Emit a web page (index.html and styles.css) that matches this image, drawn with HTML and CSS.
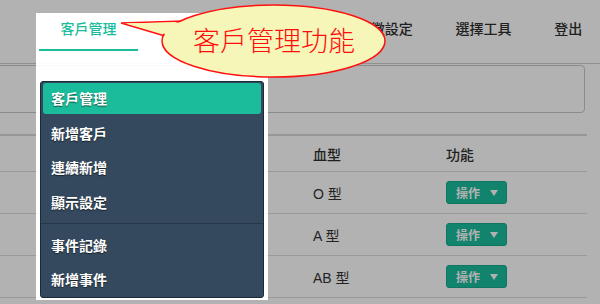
FILE: index.html
```html
<!DOCTYPE html>
<html lang="zh-Hant">
<head>
<meta charset="utf-8">
<link rel="stylesheet" href="styles.css">
</head>
<body>
<div class="page">
  <nav class="topnav">
    <ul class="nav-list">
      <li class="nav-item is-focus">
        <a class="nav-link active">客戶管理</a>
        <div class="dropdown">
          <a class="dd-item active">客戶管理</a>
          <a class="dd-item">新增客戶</a>
          <a class="dd-item">連續新增</a>
          <a class="dd-item">顯示設定</a>
          <div class="dd-divider"></div>
          <a class="dd-item">事件記錄</a>
          <a class="dd-item">新增事件</a>
        </div>
      </li>
      <li class="nav-item"><a class="nav-link">統計報表</a></li>
      <li class="nav-item"><a class="nav-link">系統管理</a></li>
      <li class="nav-item"><a class="nav-link">特徵設定</a></li>
      <li class="nav-item"><a class="nav-link">選擇工具</a></li>
      <li class="nav-item"><a class="nav-link">登出</a></li>
    </ul>
  </nav>
  <main class="content">
    <div class="search-box"></div>
    <table class="data-table">
      <colgroup>
        <col class="c-sel"><col class="c-name"><col class="c-sex"><col class="c-blood"><col class="c-act">
      </colgroup>
      <thead>
        <tr><th></th><th></th><th></th><th>血型</th><th>功能</th></tr>
      </thead>
      <tbody>
        <tr><td></td><td></td><td></td><td>O 型</td><td><span class="btn-op">操作<i class="caret"></i></span></td></tr>
        <tr><td></td><td></td><td></td><td>A 型</td><td><span class="btn-op">操作<i class="caret"></i></span></td></tr>
        <tr><td></td><td></td><td></td><td>AB 型</td><td><span class="btn-op">操作<i class="caret"></i></span></td></tr>
      </tbody>
    </table>
  </main>
</div>
<div class="intro-helper"></div>
<svg class="balloon" width="600" height="304" viewBox="0 0 600 304">
  <polygon class="tail-stroke" points="165,36 121,23 182,21"/>
  <ellipse class="bubble" cx="273.5" cy="41" rx="111.5" ry="36"/>
  <polygon class="tail-fill" points="167,34.5 125,23.2 184,22.5 186,28 170,33"/>
  <text class="balloon-text" x="274" y="51">客戶管理功能</text>
</svg>
</body>
</html>
```

FILE: styles.css
```css
html, body {
  margin: 0;
  padding: 0;
  background: #ffffff;
  overflow: hidden;
}

body {
  width: 600px;
  height: 304px;
  position: relative;
  font-family: "Liberation Sans", "Noto Sans CJK TC", sans-serif;
  color: #333333;
}

.page {
  width: 600px;
  height: 304px;
}

/* ---------- top navigation ---------- */
.topnav {
  height: 63px;
  border-bottom: 1px solid #cfcfcf;
}

.nav-list {
  display: flex;
  margin: 0;
  padding: 0 0 0 39px;
  list-style: none;
}

.nav-item {
  position: relative;
}

.nav-item.is-focus {
  z-index: 10;
}

.nav-link {
  display: block;
  padding: 18px 21.4px 11px;
  line-height: 20px;
  font-size: 14px;
  font-family: "Noto Sans CJK TC", sans-serif;
  font-weight: 500;
  color: #2f2f2f;
  border-bottom: 2px solid transparent;
  white-space: nowrap;
}

.nav-link.active {
  color: #1abc9c;
  border-bottom-color: #1abc9c;
}

/* ---------- dropdown ---------- */
.dropdown {
  position: absolute;
  top: 81px;
  left: 1px;
  width: 224px;
  box-sizing: border-box;
  display: flex;
  flex-direction: column;
  gap: 3.5px;
  padding: 1px 2px 2px;
  background: #34495e;
  border: 1px solid #1c2a38;
  border-radius: 3px;
}

.dd-item {
  display: block;
  line-height: 31px;
  height: 31px;
  padding-left: 8px;
  border-radius: 3px;
  font-family: "Noto Sans CJK TC", sans-serif;
  font-size: 14px;
  font-weight: 700;
  color: #ffffff;
  text-shadow: 0 1px 1px rgba(0, 0, 0, 0.55);
}

.dd-item.active {
  background: #1abc9c;
}

.dd-divider {
  height: 1px;
  margin: 2px -2px;
  background: #26384a;
}

/* ---------- content ---------- */
.content {
  margin-left: -15px;
  width: 602px;
}

.search-box {
  margin-top: 1px;
  width: 600px;
  height: 48px;
  box-sizing: border-box;
  border: 1px solid #c6c6c6;
  border-radius: 4px;
}

.data-table {
  margin-top: 21px;
  width: 602px;
  table-layout: fixed;
  border-collapse: separate;
  border-spacing: 0;
  border-top: 2px solid #d9d9d9;
  font-size: 14px;
}

.c-sel { width: 60px; }
.c-name { width: 140px; }
.c-sex { width: 120px; }
.c-blood { width: 133px; }
.c-act { width: 149px; }

.data-table th {
  height: 35px;
  padding: 0 8px;
  text-align: left;
  font-family: "Noto Sans CJK TC", sans-serif;
  font-weight: 500;
  font-size: 14px;
  color: #2f2f2f;
  border-bottom: 1px solid #dddddd;
  vertical-align: middle;
}

.data-table td {
  height: 41px;
  padding: 0 8px;
  border-bottom: 1px solid #dddddd;
  vertical-align: middle;
  color: #333333;
}

.btn-op {
  display: inline-flex;
  align-items: center;
  gap: 10px;
  box-sizing: border-box;
  width: 61px;
  height: 23px;
  padding: 0 0 0 9px;
  background: #1abc9c;
  border: 1px solid #18a98c;
  border-radius: 3px;
  color: #ffffff;
  font-family: "Noto Sans CJK TC", sans-serif;
  font-size: 12px;
  font-weight: 700;
  vertical-align: middle;
}

.caret {
  display: block;
  width: 0;
  height: 0;
  border-left: 4.5px solid transparent;
  border-right: 4.5px solid transparent;
  border-top: 6px solid #ffffff;
}

/* ---------- intro overlay ---------- */
.intro-helper {
  position: absolute;
  left: 36px;
  top: 13px;
  width: 232px;
  height: 287px;
  z-index: 5;
  background: rgba(255, 255, 255, 0.9);
  box-shadow: 0 0 0 1200px rgba(0, 0, 0, 0.3);
}

.balloon {
  position: absolute;
  left: 0;
  top: 0;
  z-index: 20;
  pointer-events: none;
}

.tail-stroke,
.bubble {
  fill: #f6f6b8;
  stroke: #ff1111;
  stroke-width: 1.5;
}

.tail-fill {
  fill: #f6f6b8;
}

.balloon-text {
  font-family: "Noto Sans CJK TC", sans-serif;
  font-size: 27px;
  font-weight: 300;
  fill: #ff0d0d;
  text-anchor: middle;
}
```
